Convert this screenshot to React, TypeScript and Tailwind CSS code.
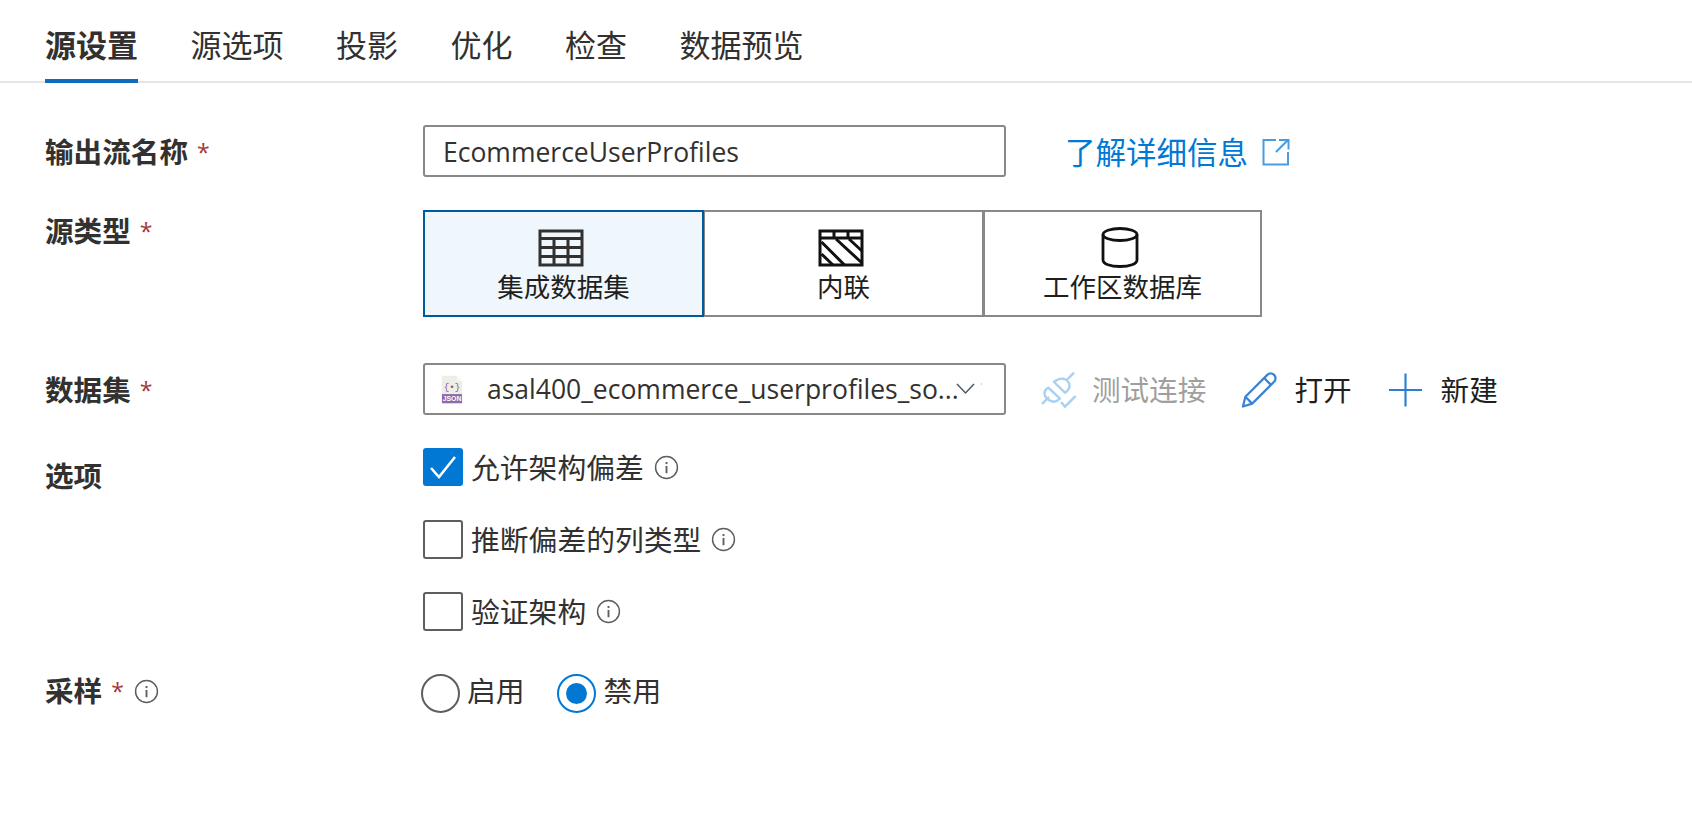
const font = "font-['Open_Sans','Noto_Sans_CJK_SC',sans-serif]";

function InfoIcon() {
  return (
    <svg width="25" height="25" viewBox="0 0 24 24" className="shrink-0 text-[#605e5c]" fill="none">
      <circle cx="12" cy="12" r="10.5" stroke="currentColor" strokeWidth="1.4" />
      <rect x="11.1" y="10.5" width="1.8" height="7" fill="currentColor" />
      <rect x="11.1" y="6.7" width="1.8" height="2" fill="currentColor" />
    </svg>
  );
}

function Label({ text, required = false, info = false }: { text: string; required?: boolean; info?: boolean }) {
  return (
    <div className="flex w-[378px] shrink-0 items-center text-[28.6px] font-semibold leading-[38px] text-[#323130]">
      <span>{text}</span>
      {required && <span className="ml-[9px] text-[23px] font-normal leading-none text-[#a4373a]">*</span>}
      {info && (
        <span className="ml-[10px]">
          <InfoIcon />
        </span>
      )}
    </div>
  );
}

function TableIcon() {
  return (
    <svg width="46" height="38" viewBox="0 0 46 38" fill="none" stroke="#323130" strokeWidth="3">
      <rect x="2" y="2" width="42" height="34" />
      <path d="M2 9.500h42M2 18.500h42M2 27.500h42M16 9.500v26M30 9.500v26" />
    </svg>
  );
}

function InlineIcon() {
  return (
    <svg width="46" height="38" viewBox="0 0 46 38" fill="none" stroke="#111" strokeWidth="3">
      <rect x="2" y="2" width="42" height="34" />
      <path d="M2 9h42M16 2v7M30 2v7" />
      <path d="M3.500 25l11.500 11M3.500 13l23 23M18 10l26 24M31 10l13 12" />
    </svg>
  );
}

function CylinderIcon() {
  return (
    <svg width="38" height="41" viewBox="0 0 38 41" fill="none" stroke="#111" strokeWidth="2.800">
      <ellipse cx="19" cy="7.500" rx="17" ry="6" />
      <path d="M2 7.500v25.500c0 4 7.500 6.500 17 6.500s17-2.500 17-6.500V7.500" />
    </svg>
  );
}

function SourceOption({ label, active = false, icon, width }: { label: string; active?: boolean; icon: React.ReactNode; width: string }) {
  return (
    <div
      className={`-mr-px flex h-[107px] flex-col items-center border-2 pt-[15px] ${width} ${
        active ? "z-10 border-[#005a9e] bg-[#eff6fc]" : "border-[#8a8886] bg-white"
      }`}
    >
      <div className="mr-[6px] flex h-[41px] items-center">{icon}</div>
      <div className="mt-[2px] text-[26.500px] leading-[34px] text-[#201f1e]">{label}</div>
    </div>
  );
}

function JsonFileIcon() {
  return (
    <svg width="22" height="29" viewBox="0 0 24 30" className="shrink-0">
      <path d="M1 0h16l6 6v24H1z" fill="#eeede8" />
      <path d="M17 0l6 6h-6z" fill="#f8f7f4" />
      <text x="12" y="15" fontSize="10" textAnchor="middle" fill="#7a5c91" fontFamily="Liberation Mono, monospace">{"{•}"}</text>
      <rect x="1" y="20" width="22" height="10" fill="#8d6aa8" />
      <text x="12" y="28" fontSize="7.500" fontWeight="700" textAnchor="middle" fill="#fff" fontFamily="Liberation Sans, sans-serif">JSON</text>
    </svg>
  );
}

function PlugIcon() {
  return (
    <svg width="36" height="36" viewBox="0 0 36 36" fill="none" stroke="#a9d0f2" strokeWidth="2.400" strokeLinecap="round" strokeLinejoin="round">
      <path d="M32.300 1.300L25.700 8" />
      <path d="M13 10l11 10.700c3.500-2.500 5-5 4.500-7.500-.5-3-3-6-6.200-6.500-3-.4-6.800 1-9.300 3.300z" />
      <path d="M7.300 15.700L19 26.700c-2.500 2.500-6 3.500-8.500 2.500-3.500-1.300-6.500-4.500-7-7.500-.3-2 1.300-4.500 3.800-6z" />
      <path d="M7.300 25.700L1.700 31.300" />
      <path d="M20.700 30.700l3.300 4 10-10" />
    </svg>
  );
}

function PencilIcon() {
  return (
    <svg width="37" height="38" viewBox="0 0 38 38" fill="none" stroke="#3a83d4" strokeWidth="2.300" strokeLinejoin="round">
      <path d="M2 36l2.500-10L27 3.500c2-2 5-2 7 0s2 5 0 7L11.500 33z" />
      <path d="M24 7l7 7M4.500 26l7 7" />
    </svg>
  );
}

function CheckRow({ label, checked = false }: { label: string; checked?: boolean }) {
  return (
    <div className="flex h-[39px] items-center">
      <div
        className={`flex w-[40px] items-center justify-center rounded-[3px] ${
          checked ? "h-[38px] self-start bg-[#0078d4]" : "h-[39px] border-2 border-[#605e5c] bg-white"
        }`}
      >
        {checked && (
          <svg width="30" height="26" viewBox="0 0 30 26" fill="none" stroke="#fff" strokeWidth="2.600">
            <path d="M3 14l8 9L27 3" />
          </svg>
        )}
      </div>
      <span className="ml-[8px] text-[28.800px] leading-[38px] text-[#323130]">{label}</span>
      <span className="ml-[10px]">
        <InfoIcon />
      </span>
    </div>
  );
}

export default function App() {
  const tabs = ["源设置", "源选项", "投影", "优化", "检查", "数据预览"];

  return (
    <div className={`h-[814px] w-[1692px] overflow-hidden bg-white ${font}`}>
      <div className="flex h-[83px] gap-[52.500px] border-b-2 border-[#e5e5e5] pl-[45px]">
        {tabs.map((tab, i) => (
          <div
            key={tab}
            className={`-mb-[2px] h-[83px] pt-[24px] text-[31px] leading-[42px] ${
              i === 0 ? "border-b-[4px] border-[#0f6cbd] font-semibold text-[#323130]" : "text-[#323130]"
            }`}
          >
            {tab}
          </div>
        ))}
      </div>

      <div className="pl-[45px] pt-[42px]">
        <div className="flex items-center">
          <div className="pt-[2px]">
            <Label text="输出流名称" required />
          </div>
          <div className="flex h-[52px] w-[583px] items-center rounded-[3px] border-2 border-[#8a8886] pl-[18px] pt-[3px] text-[26.500px] text-[#323130]">
            EcommerceUserProfiles
          </div>
          <div className="ml-[59px] flex items-center gap-[14px] pt-[2px] text-[30.500px] leading-[40px] text-[#0078d4]">
            <span>了解详细信息</span>
            <svg width="28" height="28" viewBox="0 0 28 28" fill="none" stroke="#4a9ce0" strokeWidth="2">
              <path d="M14 2H1.500v24.500H26V14M17 2h9.500v9.500M26 2L14 14" />
            </svg>
          </div>
        </div>

        <div className="mt-[33px] flex items-start">
          <div className="pt-[2px]">
            <Label text="源类型" required />
          </div>
          <div className="flex">
            <SourceOption label="集成数据集" active icon={<TableIcon />} width="w-[281px]" />
            <SourceOption label="内联" icon={<InlineIcon />} width="w-[281px]" />
            <SourceOption label="工作区数据库" icon={<CylinderIcon />} width="w-[279px]" />
          </div>
        </div>

        <div className="mt-[46px] flex items-center">
          <div className="pt-[2px]">
            <Label text="数据集" required />
          </div>
          <div className="flex h-[52px] w-[583px] items-center rounded-[3px] border-2 border-[#8a8886] pl-[16px] text-[26.500px] text-[#323130]">
            <JsonFileIcon />
            <span className="ml-[24px] whitespace-nowrap pt-[2px]">asal400_ecommerce_userprofiles_so...</span>
            <svg width="26" height="12" viewBox="0 0 26 12" fill="none" stroke="#4a5a6a" strokeWidth="1.500" className="-ml-[3px] shrink-0">
              <path d="M1 1l8.500 9L18 1" />
              <circle cx="25.500" cy="1" r="0.700" fill="#9cc4e8" stroke="none" />
            </svg>
          </div>
          <div className="ml-[35px] flex items-center pt-[1px]">
            <PlugIcon />
            <span className="ml-[15px] text-[28.600px] leading-[36px] text-[#a19f9d]">测试连接</span>
            <div className="ml-[35px]">
              <PencilIcon />
            </div>
            <span className="ml-[16px] text-[28.600px] leading-[36px] text-[#201f1e]">打开</span>
            <svg width="35" height="36" viewBox="0 0 36 36" fill="none" stroke="#2b7cd3" strokeWidth="2.200" className="ml-[36px]">
              <path d="M18 1v34M1 18h34" />
            </svg>
            <span className="ml-[18px] text-[28.600px] leading-[36px] text-[#201f1e]">新建</span>
          </div>
        </div>

        <div className="mt-[33px] flex items-start">
          <div className="pt-[9px]">
            <Label text="选项" />
          </div>
          <div className="flex flex-col gap-[33px]">
            <CheckRow label="允许架构偏差" checked />
            <CheckRow label="推断偏差的列类型" />
            <CheckRow label="验证架构" />
          </div>
        </div>

        <div className="mt-[43px] flex h-[39px] items-center">
          <div className="pb-[5px]">
            <Label text="采样" required info />
          </div>
          <div className="-ml-[2px] flex h-[39px] items-center text-[28.800px] leading-[38px] text-[#323130]">
            <div className="size-[39px] rounded-full border-2 border-[#605e5c] bg-white" />
            <span className="ml-[7px] pb-[5px]">启用</span>
            <div className="ml-[32px] flex size-[39px] items-center justify-center rounded-full border-2 border-[#0078d4] bg-white">
              <div className="size-[21px] rounded-full bg-[#0078d4]" />
            </div>
            <span className="ml-[8px] pb-[5px]">禁用</span>
          </div>
        </div>
      </div>
    </div>
  );
}
